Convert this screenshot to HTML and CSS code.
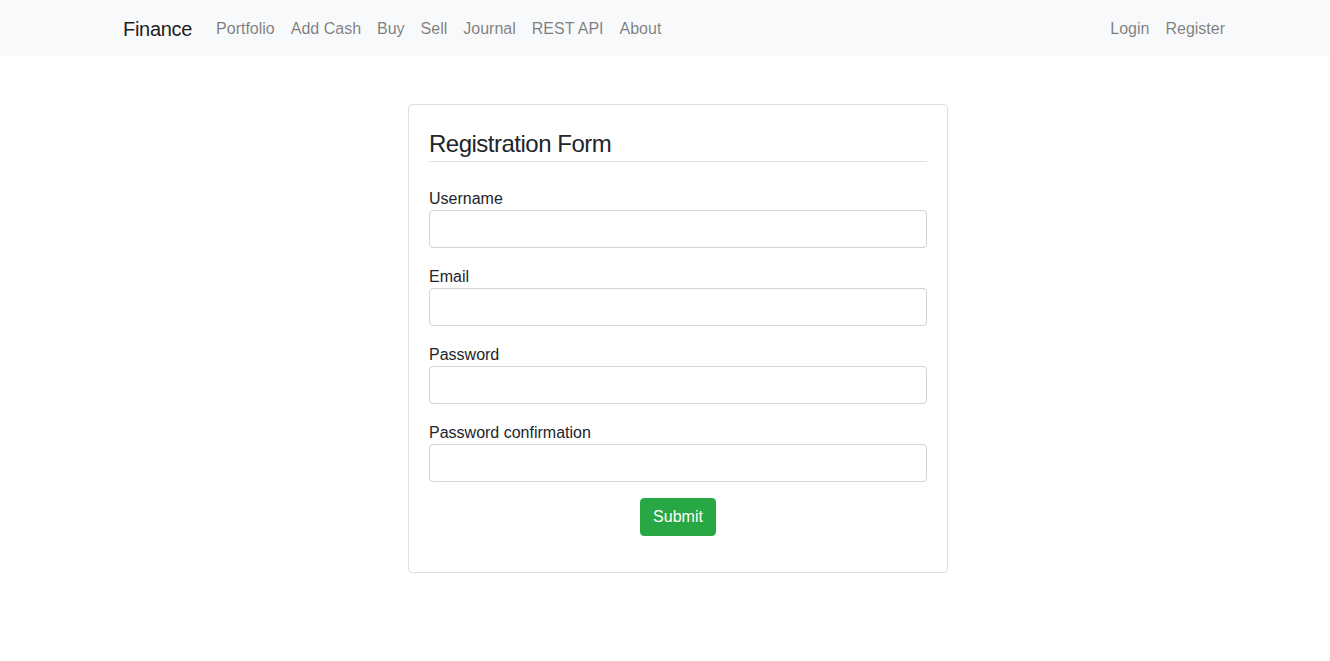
FILE: index.html
```html
<!DOCTYPE html>
<html lang="en">
<head>
<meta charset="utf-8">
<title>Finance</title>
<link rel="stylesheet" href="styles.css">
</head>
<body>
<nav class="navbar">
  <div class="nav-inner">
    <a class="brand" href="#">Finance</a>
    <ul class="nav-list">
      <li><a class="nav-link" href="#">Portfolio</a></li>
      <li><a class="nav-link" href="#">Add Cash</a></li>
      <li><a class="nav-link" href="#">Buy</a></li>
      <li><a class="nav-link" href="#">Sell</a></li>
      <li><a class="nav-link" href="#">Journal</a></li>
      <li><a class="nav-link" href="#">REST API</a></li>
      <li><a class="nav-link" href="#">About</a></li>
    </ul>
    <ul class="nav-list nav-right">
      <li><a class="nav-link" href="#">Login</a></li>
      <li><a class="nav-link" href="#">Register</a></li>
    </ul>
  </div>
</nav>
<main class="main">
  <div class="card">
    <form class="form">
      <fieldset class="fieldset">
        <legend class="legend">Registration Form</legend>
        <div class="form-group">
          <label class="label" for="username">Username</label>
          <input class="input" id="username" type="text">
        </div>
        <div class="form-group">
          <label class="label" for="email">Email</label>
          <input class="input" id="email" type="text">
        </div>
        <div class="form-group">
          <label class="label" for="password">Password</label>
          <input class="input" id="password" type="password">
        </div>
        <div class="form-group">
          <label class="label" for="confirm">Password confirmation</label>
          <input class="input" id="confirm" type="password">
        </div>
        <div class="form-group actions">
          <button class="btn-submit" type="button">Submit</button>
        </div>
      </fieldset>
    </form>
  </div>
</main>
</body>
</html>
```

FILE: styles.css
```css
* { box-sizing: border-box; }

html, body {
  margin: 0;
  padding: 0;
}

body {
  font-family: "Liberation Sans", Arial, sans-serif;
  font-size: 16px;
  line-height: 1.5;
  color: #212529;
  background: #fff;
}

a { text-decoration: none; }

.navbar {
  background: #f8f9fa;
  height: 56px;
}

.nav-inner {
  width: 1140px;
  margin: 0 auto;
  height: 56px;
  display: flex;
  align-items: center;
  padding-top: 2px;
  padding-left: 28px;
  padding-right: 2px;
}

.brand {
  font-size: 20px;
  line-height: 30px;
  color: rgba(0, 0, 0, 0.9);
  margin-right: 16px;
  letter-spacing: -0.3px;
}

.nav-list {
  list-style: none;
  margin: 0;
  padding: 0;
  display: flex;
}

.nav-right {
  margin-left: auto;
}

.nav-link {
  display: block;
  padding: 8px 8px;
  color: rgba(0, 0, 0, 0.5);
}

.main {
  display: flex;
  justify-content: center;
  padding-top: 48px;
  padding-left: 26px;
}

.card {
  width: 540px;
  border: 1px solid rgba(0, 0, 0, 0.125);
  border-radius: 4px;
  padding: 20px;
}

.form { margin: 0; }

.fieldset {
  border: 0;
  margin: 0;
  padding: 0;
  min-width: 0;
}

.legend {
  display: block;
  width: 100%;
  padding: 1px 0 0;
  font-size: 24px;
  line-height: 35px;
  letter-spacing: -0.5px;
  border-bottom: 1px solid #dee2e6;
  margin-bottom: 24px;
}

.form-group {
  margin-bottom: 16px;
}

.label {
  display: block;
  line-height: 23px;
  padding-top: 1px;
}

.input {
  display: block;
  width: 100%;
  height: 38px;
  padding: 6px 12px;
  font: inherit;
  color: #495057;
  background: #fff;
  border: 1px solid #ced4da;
  border-radius: 4px;
}

.actions {
  display: flex;
  justify-content: center;
}

.btn-submit {
  font: inherit;
  line-height: 24px;
  padding: 6px 12px;
  color: #fff;
  background: #28a745;
  border: 1px solid #28a745;
  border-radius: 4px;
  cursor: pointer;
}
```
